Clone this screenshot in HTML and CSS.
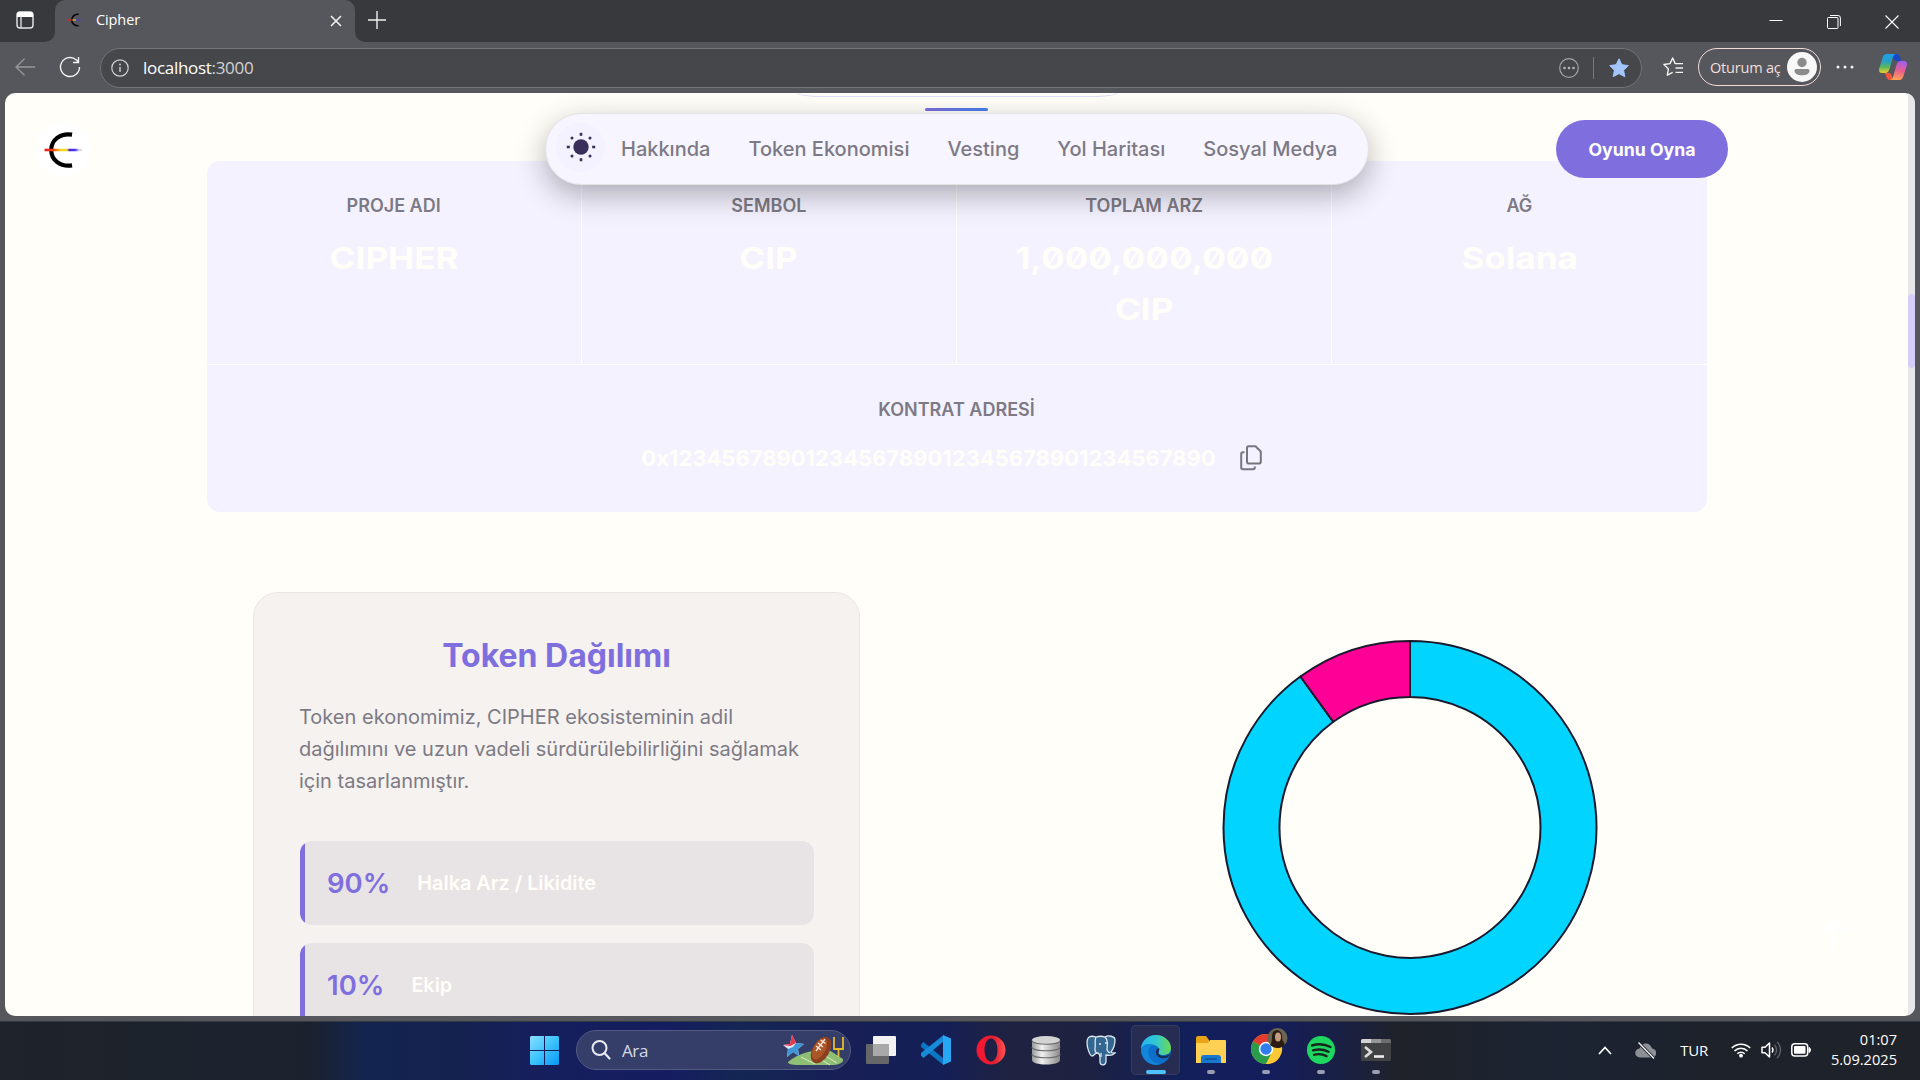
FILE: index.html
```html
<!DOCTYPE html>
<html lang="tr">
<head>
<meta charset="utf-8">
<title>Cipher</title>
<link rel="stylesheet" href="styles.css">
</head>
<body>
<div class="desktop">
  <header class="tabstrip">
    <div class="strip-left">
      <svg width="18" height="18" viewBox="0 0 18 18"><rect x="1" y="1" width="16" height="16" rx="3" fill="none" stroke="#e8e8ea" stroke-width="1.4"/><path d="M1 6V4a3 3 0 0 1 3-3h10a3 3 0 0 1 3 3v2z" fill="#fff"/><path d="M5 5v12" stroke="#e8e8ea" stroke-width="1.3"/></svg>
    </div>
    <div class="tab-slot">
      <div class="tab">
        <svg class="favicon" width="16" height="16" viewBox="0 0 16 16"><path d="M10.6 2.3A5.8 5.8 0 1 0 10.6 13.7" fill="none" stroke="#050505" stroke-width="1.6"/><path d="M0 8h4.5" stroke="#d8261c" stroke-width="1.3"/><path d="M4.5 8H8" stroke="#d9b52c" stroke-width="1.3"/><path d="M8 8h4.5" stroke="#4a3bd0" stroke-width="1.3"/></svg>
        <span class="tab-title">Cipher</span>
        <svg class="tab-close" width="12" height="12" viewBox="0 0 12 12"><path d="M1 1l10 10M11 1L1 11" stroke="#f4f4f4" stroke-width="1.5"/></svg>
      </div>
    </div>
    <div class="strip-right">
      <svg width="18" height="18" viewBox="0 0 18 18"><path d="M9 0v18M0 9h18" stroke="#f0f0f0" stroke-width="1.4"/></svg>
      <div class="window-buttons">
        <svg width="14" height="14" viewBox="0 0 14 14"><path d="M.5 5.500h13" stroke="#fff" stroke-width="1"/></svg>
        <svg width="14" height="14" viewBox="0 0 14 14"><rect x=".5" y="2.5" width="10.5" height="11" rx="1" fill="none" stroke="#fff"/><path d="M3 .5h8a2.4 2.4 0 0 1 2.4 2.4V11" fill="none" stroke="#fff"/></svg>
        <svg width="14" height="14" viewBox="0 0 14 14"><path d="M.5 .5l13 13M13.5 .5l-13 13" stroke="#fff" stroke-width="1.1"/></svg>
      </div>
    </div>
  </header>

  <div class="toolbar">
    <svg class="back" width="20" height="18" viewBox="0 0 20 18"><path d="M20 9H1M9.500 .7L1 9l8.500 8.300" fill="none" stroke="#96979b" stroke-width="1.3"/></svg>
    <svg class="reload" width="22" height="22" viewBox="0 0 22 22"><path d="M20.500 11a9.500 9.500 0 1 1-3-6.900l1.800 1.900M19.500 1v5.500H14" fill="none" stroke="#f2f2f2" stroke-width="1.4"/></svg>
    <div class="address">
      <svg width="18" height="18" viewBox="0 0 18 18"><circle cx="9" cy="9" r="8.200" fill="none" stroke="#d2d2d4" stroke-width="1.2"/><path d="M9 8v5" stroke="#d2d2d4" stroke-width="1.400"/><circle cx="9" cy="5.500" r=".9" fill="#d2d2d4"/></svg>
      <span class="url">localhost<span class="port">:3000</span></span>
      <svg width="20" height="20" viewBox="0 0 20 20"><circle cx="10" cy="10" r="9.300" fill="none" stroke="#a3a4a8" stroke-width="1.200"/><g fill="#b4b5b8"><circle cx="5.500" cy="10" r="1.300"/><circle cx="10" cy="10" r="1.300"/><circle cx="14.500" cy="10" r="1.300"/></g></svg>
      <i class="divider"></i>
      <svg width="20" height="20" viewBox="0 0 20 20"><path d="M10 .8l2.800 5.900 6.500.9-4.700 4.600 1.200 6.500L10 15.600l-5.800 3.100 1.200-6.500L.7 7.600l6.500-.9z" fill="#a3c6ff" stroke="#a3c6ff" stroke-linejoin="round"/></svg>
    </div>
    <svg class="favorites" width="21" height="20" viewBox="0 0 21 20"><path d="M14 6.600l-1.900-.2L9.700 1 7 6.600.9 7.500l4.500 4.400-1.100 6.300 5.400-2.900" fill="none" stroke="#f2f2f2" stroke-width="1.400" stroke-linejoin="round"/><path d="M12.500 6.700H20M12.500 11H20M12.500 15.300H20" stroke="#f2f2f2" stroke-width="1.300"/></svg>
    <div class="signin"><span class="signin-text">Oturum aç</span>
      <svg width="30" height="30" viewBox="0 0 30 30"><circle cx="15" cy="15" r="15" fill="#f8f8f8"/><circle cx="15" cy="10.500" r="4.700" fill="#8b8b8b"/><path d="M9 17h12a1.500 1.500 0 0 1 1.500 1.500c0 3.500-3.500 4.800-7.500 4.800s-7.500-1.300-7.500-4.800A1.500 1.500 0 0 1 9 17z" fill="#8b8b8b"/></svg>
    </div>
    <svg class="more" width="18" height="4" viewBox="0 0 18 4"><g fill="#f2f2f2"><circle cx="2" cy="2" r="1.500"/><circle cx="9" cy="2" r="1.500"/><circle cx="16" cy="2" r="1.500"/></g></svg>
    <svg class="copilot" width="28" height="26" viewBox="0 0 28 26">
      <defs><linearGradient id="cpa" x1="0" y1="0" x2="0" y2="1"><stop offset="0" stop-color="#1aa0ee"/><stop offset=".4" stop-color="#2a9fc0"/><stop offset=".7" stop-color="#5fb858"/><stop offset="1" stop-color="#f2cf2a"/></linearGradient><linearGradient id="cpb" x1=".6" y1="0" x2=".4" y2="1"><stop offset="0" stop-color="#a45cf0"/><stop offset=".5" stop-color="#e8608e"/><stop offset="1" stop-color="#ffa552"/></linearGradient></defs>
      <path d="M15 0h2.500c2 0 3 1.500 3.500 3l1 4h-4c-2 0-3-1-4-3z" fill="#1846c8"/><path d="M6 19h5l2 3c1 2 0 4-1 4h-1c-2 0-3.500-2-4-4z" fill="#f5553c"/>
      <path d="M8 0h9c-2 .5-2.800 2-3.500 4.500L10.500 15c-.8 2.800-2 4-4.500 4H3c-2.500 0-3.400-2-2.800-4.500L3.500 4C4.200 1.500 5.500 0 8 0z" fill="url(#cpa)"/>
      <path d="M20 26h-9c2-.5 2.800-2 3.500-4.500L17.500 11c.8-2.800 2-4 4.500-4h3c2.500 0 3.400 2 2.800 4.500L24.500 22c-.7 2.500-2 4-4.500 4z" fill="url(#cpb)"/></svg>
  </div>

  <div class="viewport">
    <main class="page">
      <div class="section-heading"><div class="heading-pill"></div><div class="heading-bar"></div></div>

      <section class="stats">
        <div class="stat"><span class="label">PROJE ADI</span><strong class="value">CIPHER</strong></div>
        <div class="stat"><span class="label">SEMBOL</span><strong class="value">CIP</strong></div>
        <div class="stat"><span class="label">TOPLAM ARZ</span><strong class="value">1,000,000,000<br>CIP</strong></div>
        <div class="stat"><span class="label">AĞ</span><strong class="value">Solana</strong></div>
        <div class="stat contract"><span class="label">KONTRAT ADRESİ</span>
          <div class="hash"><code class="hash-text">0x1234567890123456789012345678901234567890</code>
            <svg width="22" height="26" viewBox="0 0 22 26"><path d="M8.800 1.200h6.700L20.800 6.500v10.300a1.800 1.800 0 0 1-1.800 1.800H8.800A1.800 1.800 0 0 1 7 16.800V3a1.800 1.800 0 0 1 1.800-1.800z" fill="none" stroke="#78757f" stroke-width="2" stroke-linejoin="round"/><path d="M4.500 7.200H3A1.800 1.800 0 0 0 1.200 9v13.500A1.800 1.800 0 0 0 3 24.300h10a1.800 1.800 0 0 0 1.800-1.800v-1" fill="none" stroke="#78757f" stroke-width="2"/></svg>
          </div>
        </div>
      </section>

      <section class="distribution">
        <article class="card">
          <h2 class="card-title">Token Dağılımı</h2>
          <p class="card-text">Token ekonomimiz, CIPHER ekosisteminin adil<br>dağılımını ve uzun vadeli sürdürülebilirliğini sağlamak<br>için tasarlanmıştır.</p>
          <div class="share"><b class="percent">90%</b><span class="share-name">Halka Arz / Likidite</span></div>
          <div class="share"><b class="percent">10%</b><span class="share-name">Ekip</span></div>
        </article>
        <svg class="donut" width="376" height="376" viewBox="-188 -188.400 376 376">
          <g stroke="#1a1a2e" stroke-width="2" stroke-linejoin="round">
            <path d="M0-186.500A186.500 186.500 0 1 1-109.600-150.900L-76.700-105.600A130.500 130.500 0 1 0 0-130.500z" fill="#00d4ff"/>
            <path d="M-109.600-150.900A186.500 186.500 0 0 1 0-186.500V-130.500A130.500 130.500 0 0 0-76.700-105.600z" fill="#ff0096"/>
          </g>
        </svg>
      </section>

      <div class="brand"><svg width="40" height="36" viewBox="0 0 42 38"><path d="M29.500 2.800C17 .8 7.500 8.500 7.500 19S17 37.200 29.500 35.200" fill="none" stroke="#000" stroke-width="4.400"/><defs><linearGradient id="ray"><stop offset="0" stop-color="#e8151b"/><stop offset=".25" stop-color="#f04a12"/><stop offset=".42" stop-color="#f7d31a"/><stop offset=".6" stop-color="#f3dc28"/><stop offset=".66" stop-color="#4a25e0"/><stop offset=".82" stop-color="#4a3be8"/><stop offset=".92" stop-color="#d8d4fa"/><stop offset="1" stop-color="#fbd9b8"/></linearGradient></defs><path d="M.5 17.700h39.500v2.600h-39.500z" fill="url(#ray)"/></svg></div>

      <nav class="nav">
        <span class="theme"><svg width="32" height="32" viewBox="-16 -16 32 32" fill="#3a2f5b"><circle r="7.700"/><g><rect x="-1.300" y="-14.200" width="2.600" height="3"/><rect x="-1.300" y="11.200" width="2.600" height="3"/><rect x="-14.200" y="-1.300" width="3" height="2.600"/><rect x="11.200" y="-1.300" width="3" height="2.600"/><circle cx="-9" cy="-9" r="1.500"/><circle cx="9" cy="-9" r="1.500"/><circle cx="-9" cy="9" r="1.500"/><circle cx="9" cy="9" r="1.500"/></g></svg></span>
        <a>Hakkında</a><a>Token Ekonomisi</a><a>Vesting</a><a>Yol Haritası</a><a>Sosyal Medya</a>
      </nav>
      <a class="play">Oyunu Oyna</a>
      <svg class="to-top" width="26" height="32" viewBox="0 0 26 32"><path d="M13 31V3M2 13L13 2.500 24 13" fill="none" stroke="#fff" stroke-width="4.500"/></svg>
    </main>
    <div class="scrollbar"><div class="thumb"></div></div>
  </div>

  <footer class="taskbar">
    <div class="apps">
      <svg class="start" width="29" height="29" viewBox="0 0 29 29"><defs><linearGradient id="win" x1="0" y1="0" x2="1" y2="1"><stop offset="0" stop-color="#8be0ff"/><stop offset=".5" stop-color="#3cc3fc"/><stop offset="1" stop-color="#0a96f5"/></linearGradient></defs><path d="M1 0h13v14H0V1zM15 0h13l1 1v13H15zM0 15h14v14H1l-1-1zM15 15h14v13l-1 1H15z" fill="url(#win)"/></svg>
      <div class="search">
        <svg width="20" height="20" viewBox="0 0 20 20"><circle cx="8.500" cy="8" r="7" fill="none" stroke="#e8eaf2" stroke-width="2"/><path d="M13.500 13l5 5.500" stroke="#e8eaf2" stroke-width="2.200" stroke-linecap="round"/></svg>
        <span class="search-text">Ara</span>
        <svg class="football" width="62" height="32" viewBox="0 0 62 32">
          <path d="M5 28C16 19 32 15 46 16l14 9c1 4-5 6-12 6H16C8 31 5 30 5 28z" fill="#8fbf74"/><path d="M18 23l14 7M36 18l18 11M29 20l18 11" stroke="#d9ecc8" stroke-width="1"/>
          <path d="M9 1l4 8 8 1-6 5 1 7-6-4-6 5 1-8-5-4 7-1z" fill="#dfe4f2"/><path d="M9 1l4 8-6 3-7-1 7-1z" fill="#ec3548"/><path d="M13 9l8 1-6 5 1 7-6-4-6 5 1-8 5-2z" fill="#3f95d8"/>
          <path d="M51 3v12h9V3M55.500 15v8" fill="none" stroke="#e5b92c" stroke-width="1.800"/>
          <ellipse cx="38" cy="16" rx="8.500" ry="14.500" transform="rotate(30 38 16)" fill="#8b3f1e"/><ellipse cx="36.500" cy="15" rx="6" ry="11.500" transform="rotate(30 36.500 15)" fill="#ab5629"/><path d="M33 17l9-12M35 9l5 4M33 12l5 4M37.500 6l5 3.500" stroke="#f1e4dc" stroke-width="1.400"/></svg>
      </div>
      <div class="app"><svg width="30" height="28" viewBox="0 0 30 28"><rect x="7" y="0" width="23" height="20" rx="1" fill="#f2f2f2"/><rect x="0" y="8" width="23" height="20" rx="1" fill="#666769"/><path d="M7 8h16v12H7z" fill="#a9a9aa"/></svg></div>
      <div class="app"><svg width="30" height="30" viewBox="0 0 30 30"><path d="M0 9.500L2.500 7l20 16.500V30L0 12z" fill="#0a76c4"/><path d="M0 20.500L2.500 23l20-16.500V0L0 18z" fill="#168bd8"/><path d="M22 0l8 3.500v23L22 30z" fill="#28a8f2"/></svg></div>
      <div class="app"><svg width="30" height="30" viewBox="0 0 30 30"><defs><linearGradient id="op"><stop offset="0" stop-color="#fa1732"/><stop offset=".6" stop-color="#e21c31"/><stop offset="1" stop-color="#ff5450"/></linearGradient></defs><path fill-rule="evenodd" d="M15 .5a14.500 14.500 0 1 0 0 29 14.500 14.500 0 0 0 0-29zM15 3.500c3.900 0 6.500 5 6.500 11.500S18.900 26.500 15 26.500 8.500 21.500 8.500 15 11.100 3.500 15 3.500z" fill="url(#op)"/></svg></div>
      <div class="app"><svg width="30" height="30" viewBox="0 0 30 30"><defs><linearGradient id="db"><stop offset="0" stop-color="#999"/><stop offset=".35" stop-color="#f0f0f0"/><stop offset="1" stop-color="#8b8b8b"/></linearGradient></defs><path d="M1 5v20c0 6 28 6 28 0V5z" fill="url(#db)"/><ellipse cx="15" cy="5" rx="14" ry="4" fill="#d3d3d3"/><path d="M1 5.500c0 5 28 5 28 0M1 12c0 5 28 5 28 0M1 19c0 5 28 5 28 0" fill="none" stroke="#6c6c70" stroke-width="1.100"/></svg></div>
      <div class="app"><svg width="30" height="31" viewBox="0 0 30 31"><path d="M10 2C4 0 1 2 1 8c0 5 3 13 5 13s3-3 5-3c2 0 3 2 3 5v4c0 4 6 4 6-1v-6c4 1 7 0 9-2-2 0-4 0-4-1 3-4 4-9 4-12 0-4-7-5-10-3-3-1-6-1-9 0z" fill="#336791" stroke="#dfe7ee" stroke-width="1.300"/><path d="M10 2c-2 4 0 8-1 11-.500 3 1 5 2 5M19 2c4 4 2 8 2 12 0 2 1 3 3 4M13 9h2M19 8h2M15 18v4" fill="none" stroke="#dfe7ee" stroke-width="1.300"/></svg></div>
      <div class="app active"><svg width="30" height="30" viewBox="0 0 30 30"><defs><linearGradient id="ed1"><stop offset="0" stop-color="#2ab5f5"/><stop offset=".5" stop-color="#2fc7d0"/><stop offset="1" stop-color="#6edb4f"/></linearGradient></defs><circle cx="15" cy="15" r="15" fill="#0d6ecb"/><path d="M0 14C0 6 7 0 15 0s15 6 15 13c0 5-4 7-8 7-3 0-5-1-4-3 1-3-1-6-5-7C7 8 2 10 0 14z" fill="url(#ed1)"/><path d="M0 14c2-5 8-6 12-4-4 2-6 6-4 11 2 5 7 8 12 8C10 32 0 25 0 14z" fill="#1287d9"/><path d="M18.500 14c-2.500 4-.5 7 4 7 2.500 0 4.500-.8 6-2 .6 1-.5 2.500-2 3.500-6 2-12 0-11.500-6 .5-3 3.500-4 3.500-2.500z" fill="#1d2c55"/></svg><i class="run"></i></div>
      <div class="app"><svg width="30" height="28" viewBox="0 0 30 28"><path d="M0 2a2 2 0 0 1 2-2h8l3 4v5H0z" fill="#e8a317"/><path d="M0 7h12l2-3h15a1 1 0 0 1 1 1v22H0z" fill="#ffd053"/><path d="M5 27v-5a3 3 0 0 1 3-3h14a3 3 0 0 1 3 3v5z" fill="#1878cf"/><path d="M9 23h12" stroke="#0e4e94" stroke-width="1.400"/></svg><i class="dot"></i></div>
      <div class="app"><svg class="chrome" width="38" height="38" viewBox="0 0 38 38"><circle cx="16" cy="22" r="15" fill="#f0c02c"/><path d="M16 22L3 14.500A15 15 0 0 1 29 14.500z" fill="#e33b2e"/><path d="M16 37A15 15 0 0 1 3 14.500L16 22l5 5z" fill="#2a9c4c"/><path d="M16 15h14.300A15 15 0 0 1 16 37l6-11z" fill="#fcc934"/><circle cx="16" cy="22" r="7.200" fill="#fff"/><circle cx="16" cy="22" r="5.700" fill="#2f7df0"/><circle cx="27.500" cy="11" r="10" fill="#6b6450"/><path d="M23 5c4-4 9-1 9 4 0 4 1 6 3 8-3 5-10 5-15 1 3-3 1-8 3-13z" fill="#2b1b13"/><ellipse cx="28" cy="10" rx="3" ry="4.500" fill="#c79a82"/></svg><i class="dot"></i></div>
      <div class="app"><svg width="28" height="28" viewBox="0 0 28 28"><circle cx="14" cy="14" r="14" fill="#1ed760"/><path d="M5 9.500c6-2 13-1.300 18.500 1.500M6 14.300c5.500-1.500 11-.8 15.500 1.500M7 18.800c4.500-1.200 9-.6 12.500 1.300" fill="none" stroke="#15261c" stroke-width="2.400" stroke-linecap="round"/></svg><i class="dot"></i></div>
      <div class="app"><svg width="30" height="22" viewBox="0 0 30 22"><rect width="30" height="22" rx="1.500" fill="#414244"/><path d="M0 4V1.500A1.500 1.500 0 0 1 1.500 0H10v4z" fill="#d3d3d3"/><path d="M10 0h10v4H10z" fill="#979798"/><path d="M20 0h8.500A1.500 1.500 0 0 1 30 1.500V4H20z" fill="#6c6d6f"/><path d="M4 8l6 5-6 5" fill="none" stroke="#ddd" stroke-width="2.600"/><path d="M13 17.500h10" stroke="#eee" stroke-width="2.600"/></svg><i class="dot"></i></div>
    </div>
    <div class="tray">
      <svg class="chev" width="14" height="9" viewBox="0 0 14 9"><path d="M1 8l6-6.500L13 8" fill="none" stroke="#fff" stroke-width="1.700"/></svg>
      <svg class="cloud" width="22" height="17" viewBox="0 0 22 17"><path d="M5 15.500A4.500 4.500 0 0 1 4.500 6.500C5.500 3 8 1.500 11 1.500s5 2 6 5c6 .5 5 9 0 9z" fill="#8d9196"/><path d="M3.500 .5l15.500 16" stroke="#1c212b" stroke-width="3.200"/><path d="M3.500 .5l15.500 16" stroke="#f2f2f2" stroke-width="1.400"/></svg>
      <span class="lang">TUR</span>
      <svg class="wifi" width="20" height="16" viewBox="0 0 20 16"><path d="M.8 6a13 13 0 0 1 18.400 0M3.500 9a9 9 0 0 1 13 0M6.300 11.800a5.300 5.300 0 0 1 7.400 0" fill="none" stroke="#fff" stroke-width="1.600"/><circle cx="10" cy="13.700" r="1.900" fill="#fff"/></svg>
      <svg class="volume" width="21" height="18" viewBox="0 0 21 18"><path d="M1 6.300h3L8.500 2v14L4 11.700H1z" fill="none" stroke="#fff" stroke-width="1.500" stroke-linejoin="round"/><path d="M11 6.500a4 4 0 0 1 0 5" fill="none" stroke="#fff" stroke-width="1.400"/><path d="M13.500 3.800a7.500 7.500 0 0 1 0 10.400M16 1a11 11 0 0 1 0 16" fill="none" stroke="#5d6169" stroke-width="1.400"/></svg>
      <svg class="battery" width="20" height="14" viewBox="0 0 20 14"><rect x=".8" y=".8" width="15.900" height="12.200" rx="3" fill="none" stroke="#fff" stroke-width="1.500"/><rect x="3" y="3" width="11.500" height="7.800" rx="1" fill="#fff"/><path d="M18 4.500c2 .5 2 4.500 0 5z" fill="#fff" stroke="#fff"/></svg>
      <div class="clock"><span>01:07</span><span>5.09.2025</span></div>
    </div>
  </footer>
</div>
</body>
</html>
```
FILE: styles.css
```css
* { box-sizing: border-box; }
body { margin: 0; background: #56575c; overflow: hidden; font-family: Inter, sans-serif; }
svg { display: block; flex: none; }

.desktop { display: grid; grid-template-rows: 42px 51px 928px 59px; width: 1920px; height: 1080px; }

/* Browser frame */
.tabstrip { display: grid; grid-template-columns: 55px 300px 1fr; font-family: "Open Sans", sans-serif; }
.strip-left { background: #38393c; border-bottom-right-radius: 10px; padding: 11px 0 0 16px; }
.tab-slot { background: linear-gradient(#38393c 14px, #56575c 14px); }
.tab { display: flex; align-items: center; height: 42px; padding: 0 13px 3px 13px; background: #56575c; border-radius: 10px 10px 0 0; }
.tab-title { margin-left: 12px; flex: 1; color: #fff; font-size: 14.500px; letter-spacing: -.1px; }
.tab-close { margin-top: 3px; }
.strip-right { display: flex; justify-content: space-between; align-items: flex-start; background: #38393c; border-bottom-left-radius: 10px; padding: 11px 22px 0 13px; }
.window-buttons { display: flex; gap: 44px; margin-right: 1px; padding-top: 4px; }

.toolbar { display: flex; align-items: center; padding: 0 15px 1px 15px; height: 51px; font-family: "Open Sans", sans-serif; }
.reload { margin: 0 19px 0 24px; }
.address { display: flex; align-items: center; width: 1542px; height: 40px; padding: 0 12px 0 10px; margin-top: 1px; border: 1px solid #737478; border-radius: 20px; background: #46474a; }
.url { flex: 1; margin-left: 14px; color: #fff; font-size: 17px; letter-spacing: -.3px; }
.port { color: #d2d2d4; }
.divider { width: 1px; height: 22px; margin: 0 15px 0 14px; background: #77787c; }
.favorites { margin: 0 14px 0 21px; }
.signin { display: flex; align-items: center; justify-content: space-between; width: 123px; height: 38px; padding: 0 3px 0 11px; border: 1px solid #f3dcd8; border-radius: 19px; color: #f3dedb; font-size: 14.500px; letter-spacing: -.2px; white-space: nowrap; }
.more { margin: 0 25px 0 15px; }

/* Page */
.viewport { display: flex; width: 1910px; height: 923px; margin-left: 5px; border-radius: 10px; overflow: hidden; background: #fffef9; }
.page { position: relative; width: 1903px; height: 923px; overflow: hidden; }
.scrollbar { width: 7px; padding-top: 201px; background: #e7e7ea; }
.thumb { height: 74px; border-radius: 4px; background: #d6cdf8; }

.section-heading { display: flex; flex-direction: column; align-items: center; height: 68px; }
.heading-pill { width: 320px; height: 4px; border-radius: 0 0 24px 24px / 0 0 4px 4px; border: 1px solid #deddfb; border-top: 0; }
.heading-bar { width: 63px; height: 3px; margin-top: 11px; border-radius: 2px; background: linear-gradient(90deg, #7f6edd, #4580ee); }

.stats { display: grid; grid-template: 203px 147px / repeat(4, 1fr); gap: 1px; width: 1500px; margin-left: 201.500px; border-radius: 13px; overflow: hidden; }
.stat { display: flex; flex-direction: column; align-items: center; padding-top: 30px; background: #f4f2ff; text-align: center; }
.contract { grid-column: 1 / -1; }
.label { color: #7d7a85; font-size: 18px; font-weight: 600; line-height: 29px; }
.value { margin-top: 12px; color: #fffef9; font-size: 30.500px; line-height: 51px; font-weight: 700; font-feature-settings: "zero"; transform: scaleX(1.15); }
.hash { display: flex; align-items: center; gap: 24px; margin: 21px 10px 0 0; color: #fffef9; }
.hash-text { font-family: Inter, sans-serif; font-size: 22px; line-height: 26px; font-weight: 700; }

.distribution { display: flex; margin-top: 80px; }
.card { width: 607px; height: 460px; margin-left: 248px; padding: 44px 45px 0; border: 1px solid #e9e6e6; border-radius: 25px; background: #f5f2f0; }
.card-title { margin: 0; color: #7f6edd; font-size: 32px; line-height: 38px; font-weight: 700; text-align: center; }
.card-text { margin: 26px 0 44px; color: #7d7a85; font-size: 20px; line-height: 32px; white-space: nowrap; }
.share { display: flex; align-items: center; height: 84px; margin: 0 0 18px 1px; padding-left: 27px; border-radius: 12px; background: linear-gradient(90deg, #7f6edd 5px, #e8e4e6 5px); }
.percent { color: #7f6edd; font-size: 27.500px; font-weight: 600; }
.share-name { margin-left: 27px; color: #fffef9; font-size: 19.800px; font-weight: 600; }
.donut { margin: 47px 0 0 362px; }

.brand { position: absolute; left: 31px; top: 30px; display: grid; place-items: center; width: 54px; height: 54px; padding-left: 1px; border-radius: 50%; background: #fff; }
.nav { position: absolute; left: 540px; top: 20px; display: flex; align-items: center; gap: 38px; width: 824px; height: 72px; padding-left: 10px; border: 1px solid #e5e2e4; border-radius: 36px; background: #f7f5ff; box-shadow: 0 10px 30px rgba(0, 0, 0, .3); color: #7d7a85; font-size: 20px; font-weight: 500; white-space: nowrap; }
.theme { display: grid; flex: none; place-items: center; width: 49px; height: 49px; margin: 0 -22px 4px 0; border-radius: 50%; background: #f4f2ff; }
.play { position: absolute; left: 1551px; top: 27px; display: grid; place-items: center; width: 172px; height: 58px; border-radius: 29px; background: #7f6edd; color: #fff; font-size: 17.700px; font-weight: 700; }
.to-top { position: absolute; left: 1815px; top: 826px; }

/* Taskbar */
.taskbar { display: flex; justify-content: space-between; font-family: "Open Sans", sans-serif; color: #fff; border-top: 1px solid #33373f; background: linear-gradient(90deg, #1f232b 0, #1b222e 310px, #13244f 365px, #14224f 460px, #161f5c 530px, #151d60 670px, #142653 740px, #171f56 840px, #141f57 940px, #1f2240 1010px, #1e2240 1080px, #12205a 1180px, #141d5c 1270px, #1a2040 1350px, #1f2229 1400px, #1c2433 1560px, #1d222b 1700px, #1f2229 1920px); }
.apps { display: flex; align-items: center; padding-left: 530px; height: 56px; }
.search { display: flex; align-items: center; width: 275px; height: 40px; margin: 0 2px 0 17px; padding: 0 5px 0 14px; border: 1px solid #535b82; border-radius: 20px; background: #353e69; }
.search-text { flex: 1; margin-left: 11px; color: #d5d8e4; font-size: 17px; letter-spacing: -.4px; }
.app { position: relative; display: grid; place-items: center; width: 49px; height: 50px; margin: 0 3px; border-radius: 5px; }
.active { background: #272c53; box-shadow: inset 0 0 0 1px #353a5e; }
.chrome { margin: 0 0 8px 6px; }
.run, .dot { position: absolute; bottom: 1px; height: 4px; border-radius: 2px; }
.run { width: 20px; background: #4cc2ff; }
.dot { width: 8px; background: #9b9eb2; }
.tray { display: flex; align-items: center; height: 56px; padding-right: 24px; }
.cloud { margin: 0 23px 0 23px; }
.lang { font-size: 15px; letter-spacing: -.2px; }
.wifi { margin-left: 23px; }
.volume { margin: 0 9px 0 10px; }
.clock { display: flex; flex-direction: column; align-items: flex-end; width: 87px; padding-right: 1px; margin-top: -2px; font-size: 14.600px; line-height: 20px; }
```
